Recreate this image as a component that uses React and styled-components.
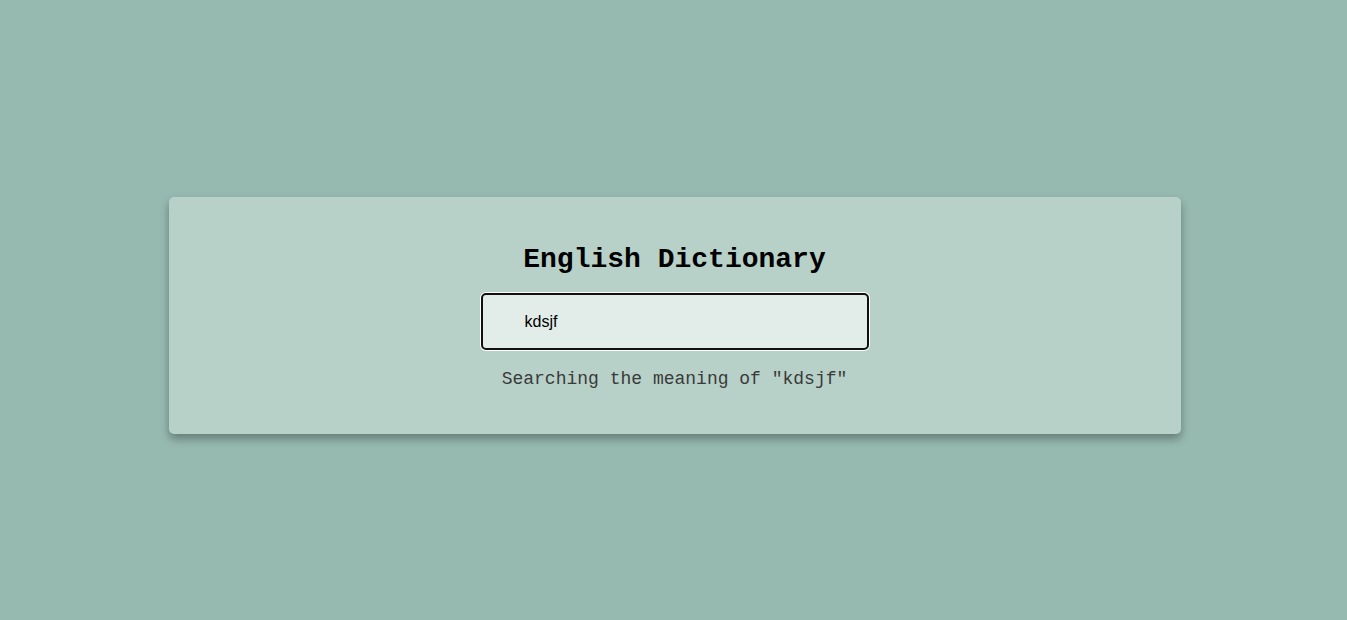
import React, { useState } from 'react'
import styled, { createGlobalStyle } from 'styled-components'

const GlobalStyle = createGlobalStyle`
  * {
    box-sizing: border-box;
  }
  body {
    margin: 0;
    background: #97bab0;
    font-family: "Liberation Mono", "Courier New", monospace;
  }
`

const Page = styled.main`
  min-height: 100vh;
  display: flex;
  align-items: center;
  justify-content: center;
  padding: 11px 0 0 2px;
`

const Card = styled.section`
  width: 1012px;
  background: #b7d1c8;
  border-radius: 5px;
  box-shadow: 0 5px 10px rgba(0, 0, 0, 0.33);
  padding: 47px 20px 44px;
  display: flex;
  flex-direction: column;
  align-items: center;
`

const Title = styled.h1`
  margin: 0 0 17px;
  font-family: "Liberation Mono", "Courier New", monospace;
  font-size: 28px;
  font-weight: 700;
  line-height: 32px;
  color: #000;
`

const SearchInput = styled.input`
  width: 388px;
  height: 57px;
  padding: 0 16px 0 42px;
  border: 2px solid #101010;
  border-radius: 5px;
  background: #e2ece8;
  box-shadow: 0 0 0 1px #fff;
  outline: none;
  font-family: "Liberation Sans", Arial, sans-serif;
  font-size: 16px;
  color: #000;
`

const Status = styled.p`
  margin: 18px 0 0;
  font-family: "Liberation Mono", "Courier New", monospace;
  font-size: 18px;
  line-height: 22px;
  color: #3a3a3a;
`

export default function App() {
  const [word, setWord] = useState('kdsjf')
  return (
    <>
      <GlobalStyle />
      <Page>
        <Card>
          <Title>English Dictionary</Title>
          <SearchInput
            type="text"
            value={word}
            autoFocus
            onChange={(e) => setWord(e.target.value)}
          />
          <Status>Searching the meaning of "{word}"</Status>
        </Card>
      </Page>
    </>
  )
}
